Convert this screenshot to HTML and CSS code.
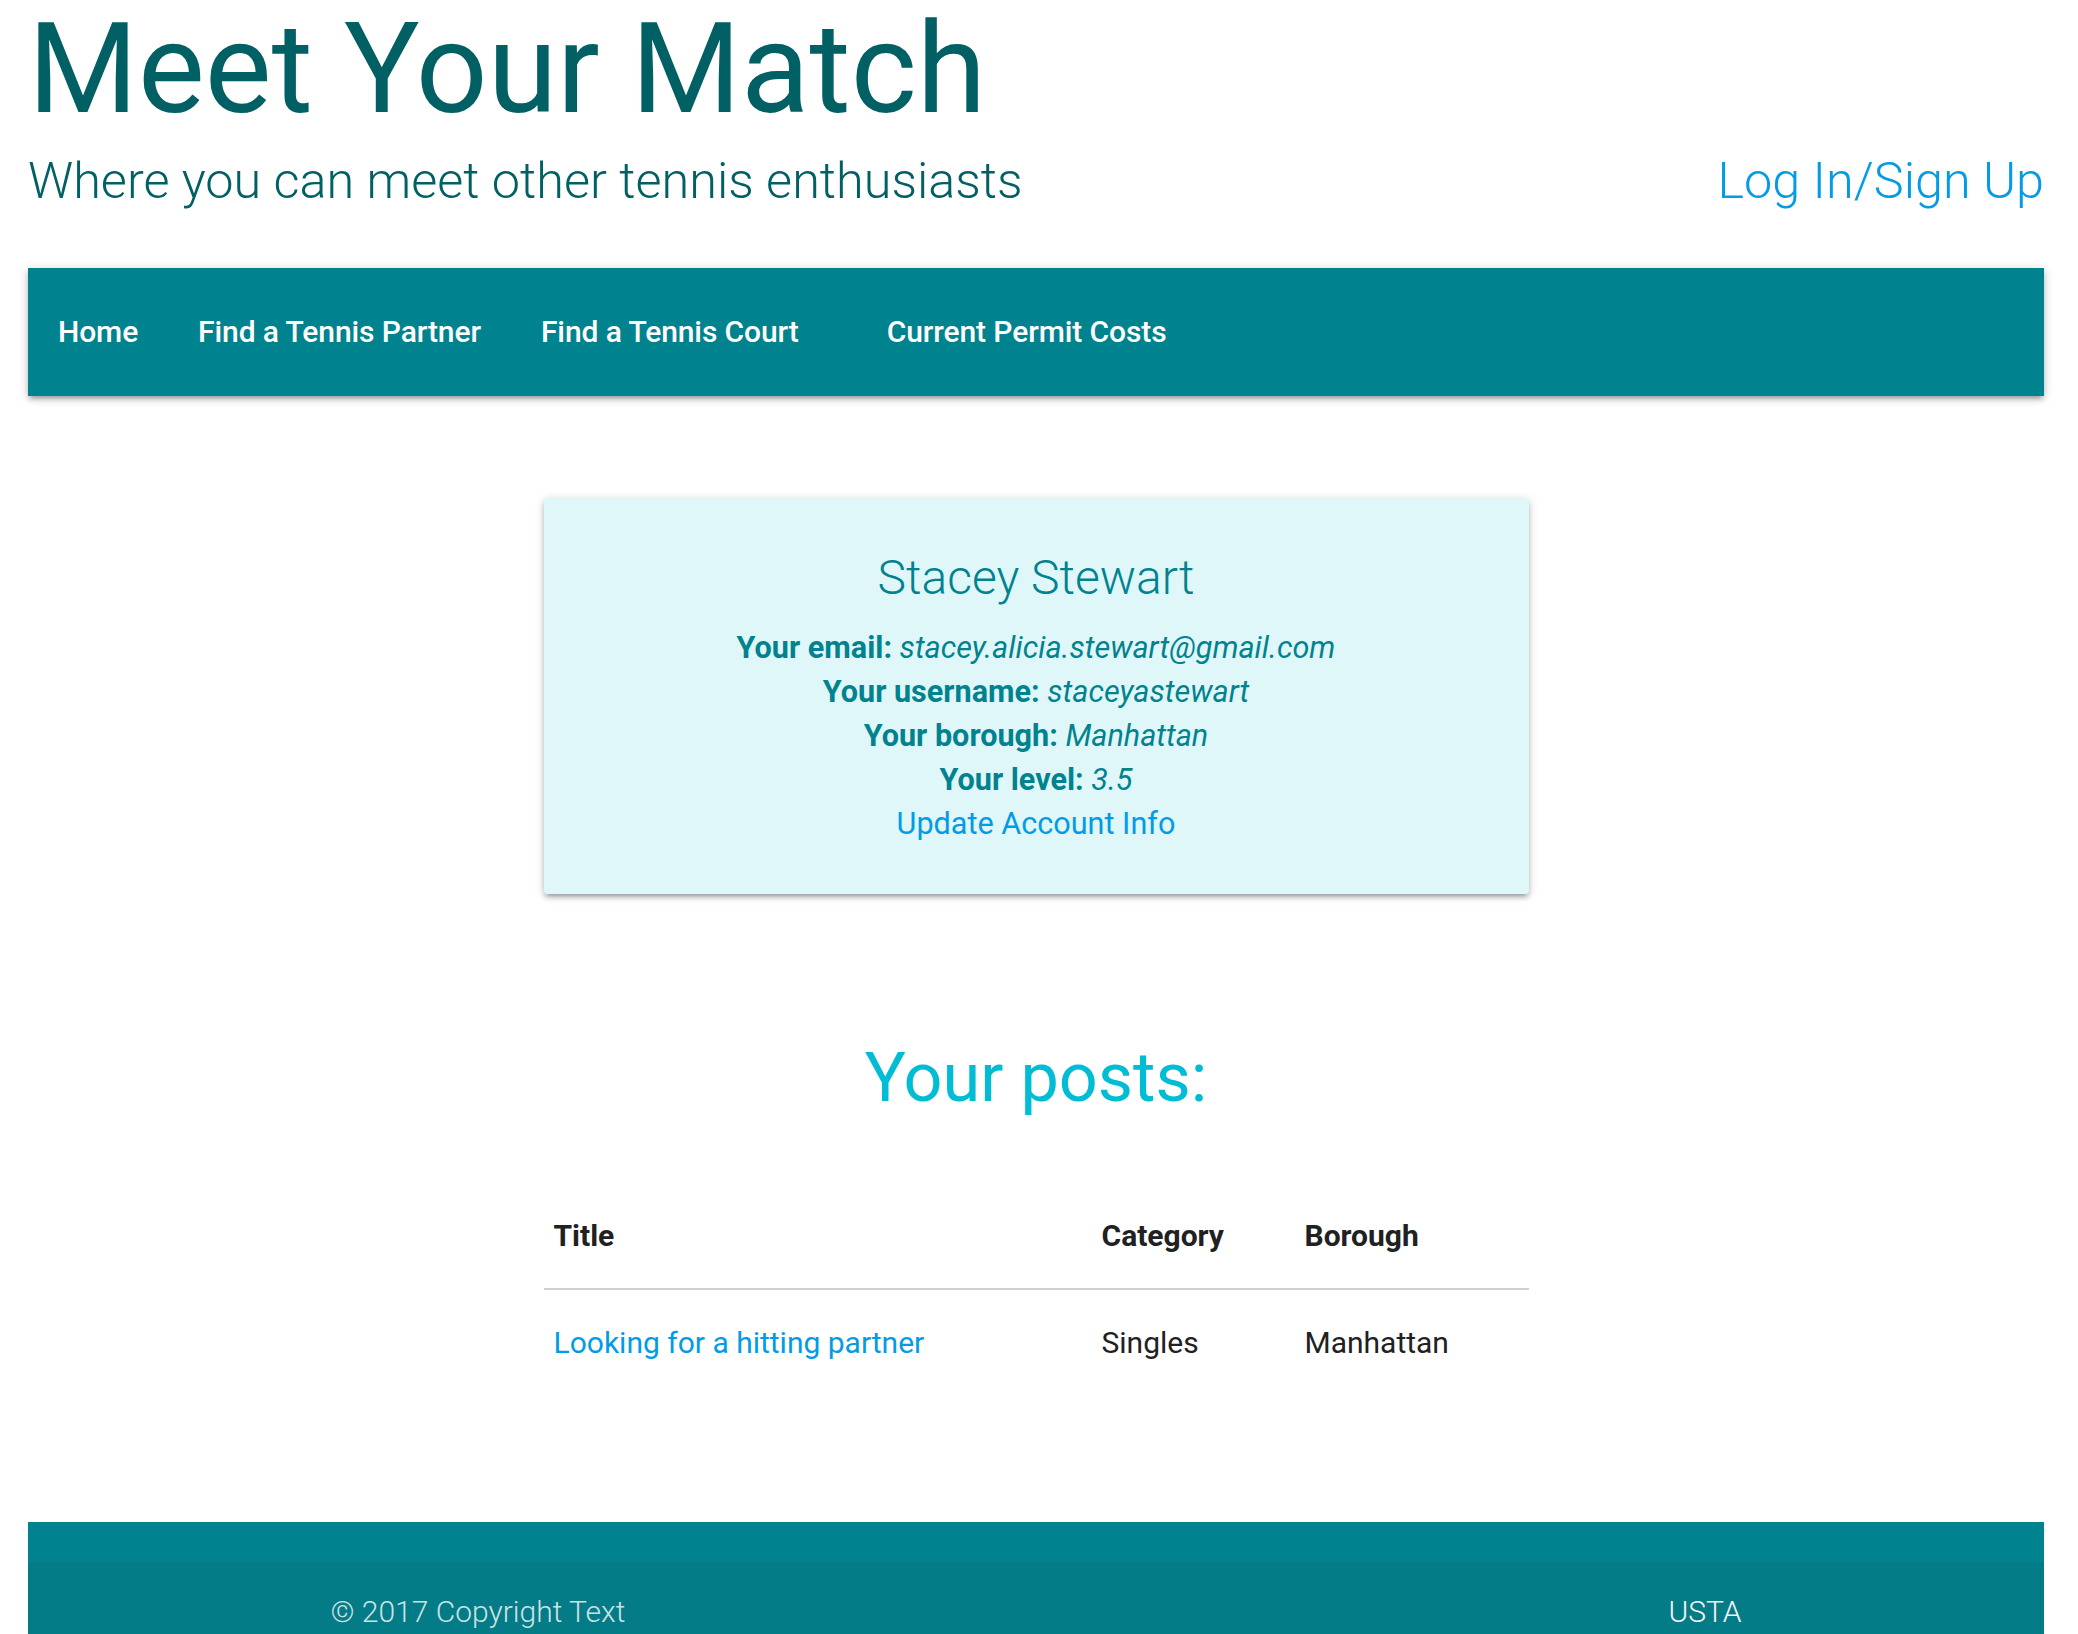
FILE: index.html
```html
<!DOCTYPE html>
<html lang="en">
<head>
<meta charset="utf-8">
<title>Meet Your Match</title>
<link rel="stylesheet" href="styles.css">
</head>
<body>
<div class="page">
  <header class="site-header">
    <h1 class="brand">Meet Your Match</h1>
    <div class="tagline-row">
      <h5 class="tagline">Where you can meet other tennis enthusiasts</h5>
      <a class="login" href="#">Log In/Sign Up</a>
    </div>
  </header>

  <nav class="main-nav">
    <ul>
      <li><a href="#">Home</a></li>
      <li><a href="#">Find a Tennis Partner</a></li>
      <li><a href="#">Find a Tennis Court</a></li>
      <li class="spaced"><a href="#">Current Permit Costs</a></li>
    </ul>
  </nav>

  <main class="content">
    <section class="profile-card">
      <h2 class="card-title">Stacey Stewart</h2>
      <p class="info"><b>Your email:</b> <i>stacey.alicia.stewart@gmail.com</i></p>
      <p class="info"><b>Your username:</b> <i>staceyastewart</i></p>
      <p class="info"><b>Your borough:</b> <i>Manhattan</i></p>
      <p class="info"><b>Your level:</b> <i>3.5</i></p>
      <p class="info"><a class="link" href="#">Update Account Info</a></p>
    </section>

    <h4 class="posts-title">Your posts:</h4>

    <table class="posts">
      <thead>
        <tr>
          <th class="col-title">Title</th>
          <th class="col-cat">Category</th>
          <th class="col-boro">Borough</th>
        </tr>
      </thead>
      <tbody>
        <tr>
          <td><a class="link" href="#">Looking for a hitting partner</a></td>
          <td>Singles</td>
          <td>Manhattan</td>
        </tr>
      </tbody>
    </table>
  </main>

  <footer class="page-footer">
    <div class="footer-copyright">
      <div class="footer-container">
        <span class="copy">© 2017 Copyright Text</span>
        <a class="usta" href="#">USTA</a>
      </div>
    </div>
  </footer>
</div>
</body>
</html>
```

FILE: styles.css
```css
html, body {
  margin: 0;
  padding: 0;
  background: #ffffff;
}

body {
  font-family: Roboto, "Noto Sans", "Liberation Sans", sans-serif;
  color: rgba(0, 0, 0, 0.87);
  font-size: 30px;
}

a {
  text-decoration: none;
}

.page {
  width: 2016px;
  margin-left: 28px;
}

/* Header */
.brand {
  margin: 0;
  font-size: 126px;
  font-weight: 400;
  line-height: 138.6px;
  color: #006064;
}

.tagline-row {
  display: flex;
  justify-content: space-between;
  align-items: baseline;
  margin-top: 15px;
}

.tagline {
  margin: 0;
  font-size: 50.4px;
  font-weight: 300;
  line-height: 54px;
  color: #006064;
}

.login {
  font-size: 50.4px;
  font-weight: 300;
  line-height: 54px;
  color: #039be5;
}

/* Nav */
.main-nav {
  margin-top: 60px;
  height: 128px;
  background: #00838f;
  box-shadow: 0 4px 4px 0 rgba(0, 0, 0, 0.14), 0 6px 2px -4px rgba(0, 0, 0, 0.12), 0 2px 10px 0 rgba(0, 0, 0, 0.2);
}

.main-nav ul {
  list-style: none;
  margin: 0;
  padding: 0;
  display: flex;
}

.main-nav li.spaced {
  margin-left: 28px;
}

.main-nav a {
  display: block;
  padding: 0 30px;
  line-height: 128px;
  font-size: 30px;
  font-weight: 500;
  letter-spacing: -0.1px;
  color: #ffffff;
}

/* Content */
.content {
  width: 985px;
  margin: 0 auto;
}

.profile-card {
  margin-top: 102px;
  padding: 48px;
  background: #e0f7fa;
  border-radius: 4px;
  text-align: center;
  color: #00838f;
  box-shadow: 0 4px 4px 0 rgba(0, 0, 0, 0.14), 0 6px 2px -4px rgba(0, 0, 0, 0.12), 0 2px 10px 0 rgba(0, 0, 0, 0.2);
}

.card-title {
  margin: 0 0 16px;
  font-size: 48px;
  font-weight: 300;
  line-height: 64px;
  color: #00838f;
}

.info {
  margin: 0;
  font-size: 30.6px;
  line-height: 44px;
}

.info b {
  font-weight: 700;
}

.link {
  color: #039be5;
}

.posts-title {
  margin: 147px 0 67px;
  text-align: center;
  font-size: 68.4px;
  font-weight: 400;
  line-height: 75.2px;
  color: #00bcd4;
}

.posts {
  width: 985px;
  border-collapse: collapse;
  table-layout: fixed;
}

.posts thead {
  border-bottom: 2px solid #d0d0d0;
}

.posts th,
.posts td {
  padding: 30px 10px;
  text-align: left;
  font-size: 30px;
  line-height: 45px;
  color: #212121;
}

.posts th {
  font-weight: 700;
}

.posts td {
  font-weight: 400;
}

.col-title { width: 528px; }
.col-cat { width: 183px; }
.col-boro { width: auto; }

/* Footer */
.page-footer {
  margin-top: 127px;
  padding-top: 40px;
  background: #00838f;
}

.footer-copyright {
  padding: 20px 0;
  background: rgba(51, 51, 51, 0.08);
}

.footer-container {
  width: 1411px;
  margin: 0 auto;
  display: flex;
  justify-content: space-between;
  font-size: 30px;
  font-weight: 300;
  line-height: 60px;
}

.copy {
  color: rgba(255, 255, 255, 0.8);
}

.usta {
  color: #f5f5f5;
}
```
